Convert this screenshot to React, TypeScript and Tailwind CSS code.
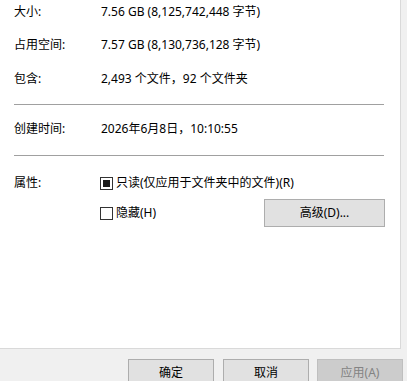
import React from 'react';

const font = { fontFamily: '"Noto Sans", "Noto Sans CJK SC", sans-serif' };

const InfoRow: React.FC<{ label: string; value: string; className?: string }> = ({ label, value, className }) => (
  <div className={`flex items-center h-[24px] ${className ?? ''}`}>
    <div className="w-[87px] shrink-0">{label}</div>
    <div>{value}</div>
  </div>
);

const Checkbox: React.FC<{ checked?: boolean; label: string }> = ({ checked, label }) => (
  <div className="flex items-center gap-[3px]">
    <div className="w-[13px] h-[13px] border border-[#333333] bg-white flex items-center justify-center">
      {checked && <div className="w-[7px] h-[7px] bg-[#1a1a1a]" />}
    </div>
    <span>{label}</span>
  </div>
);

export default function App() {
  return (
    <div className="w-[407px] h-[381px] overflow-hidden bg-[#f0f0f0] text-[12px] text-black" style={font}>
      {/* White tab page */}
      <div className="w-[401px] h-[349px] bg-white border-r border-b border-[#d9d9d9] pl-[14px]">
        <InfoRow label="大小:" value="7.56 GB (8,125,742,448 字节)" />
        <InfoRow label="占用空间:" value="7.57 GB (8,130,736,128 字节)" className="mt-[9px]" />
        <InfoRow label="包含:" value="2,493 个文件，92 个文件夹" className="mt-[10px]" />
        <div className="mt-[13px] w-[370px] h-px bg-[#a0a0a0]" />
        <InfoRow label="创建时间:" value="2026年6月8日，10:10:55" className="mt-[12px]" />
        <div className="mt-[14px] w-[370px] h-px bg-[#a0a0a0]" />
        <div className="flex items-center h-[24px] mt-[15px]">
          <div className="w-[86px] shrink-0">属性:</div>
          <Checkbox checked label="只读(仅应用于文件夹中的文件)(R)" />
        </div>
        <div className="flex items-center h-[28px] mt-[4px]">
          <div className="w-[86px] shrink-0" />
          <div className="w-[164px]">
            <Checkbox label="隐藏(H)" />
          </div>
          <button className="w-[121px] h-[28px] bg-[#e1e1e1] border border-[#adadad] text-black">
            高级(D)...
          </button>
        </div>
      </div>

      {/* Dialog buttons */}
      <div className="flex mt-[10px] pl-[128px]">
        <button className="w-[86px] h-[28px] bg-[#e1e1e1] border border-[#adadad] text-black">确定</button>
        <button className="w-[86px] h-[28px] ml-[9px] bg-[#e1e1e1] border border-[#adadad] text-black">取消</button>
        <button className="w-[86px] h-[28px] ml-[8px] bg-[#cccccc] border border-[#bfbfbf] text-[#838383]">应用(A)</button>
      </div>
    </div>
  );
}
